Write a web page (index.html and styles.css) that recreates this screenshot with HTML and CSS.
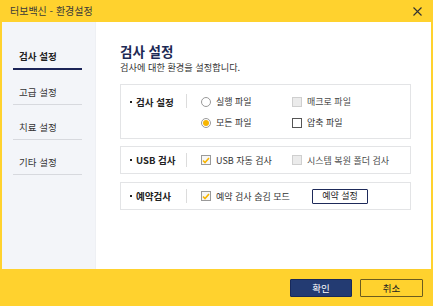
FILE: index.html
```html
<!DOCTYPE html>
<html lang="ko">
<head>
<meta charset="utf-8">
<title>터보백신 - 환경설정</title>
<link rel="stylesheet" href="styles.css">
</head>
<body>
<div class="window">
  <div class="titlebar">
    <span class="title">터보백신 - 환경설정</span>
    <svg class="close" width="9" height="9" viewBox="0 0 9 9"><path d="M0.5 0.5L8.5 8.5M8.5 0.5L0.5 8.5" stroke="#333" stroke-width="1.1" fill="none"/></svg>
  </div>
  <div class="body">
    <nav class="sidebar">
      <div class="nav-item active">검사 설정</div>
      <div class="nav-item">고급 설정</div>
      <div class="nav-item">치료 설정</div>
      <div class="nav-item">기타 설정</div>
    </nav>
    <main class="main">
      <h1 class="heading">검사 설정</h1>
      <p class="subtitle">검사에 대한 환경을 설정합니다.</p>

      <section class="box box-tall">
        <div class="label"><span class="dot"></span>검사 설정</div>
        <div class="sep"></div>
        <div class="grid">
          <div class="opt"><span class="radio"></span>실행 파일</div>
          <div class="opt disabled"><span class="check off"></span>매크로 파일</div>
          <div class="opt"><span class="radio on"></span>모든 파일</div>
          <div class="opt"><span class="check"></span>압축 파일</div>
        </div>
      </section>

      <section class="box">
        <div class="label"><span class="dot"></span>USB 검사</div>
        <div class="sep"></div>
        <div class="grid">
          <div class="opt"><span class="check checked"><svg width="8" height="7" viewBox="0 0 8 7"><path d="M1 3.5L3 5.5L7 1" stroke="#f7b500" stroke-width="1.6" fill="none"/></svg></span>USB 자동 검사</div>
          <div class="opt disabled"><span class="check off"></span>시스템 복원 폴더 검사</div>
        </div>
      </section>

      <section class="box">
        <div class="label"><span class="dot"></span>예약검사</div>
        <div class="sep"></div>
        <div class="row">
          <div class="opt wide"><span class="check checked"><svg width="8" height="7" viewBox="0 0 8 7"><path d="M1 3.5L3 5.5L7 1" stroke="#f7b500" stroke-width="1.6" fill="none"/></svg></span>예약 검사 숨김 모드</div>
          <button class="small-btn">예약 설정</button>
        </div>
      </section>
    </main>
  </div>
  <div class="footer">
    <button class="btn primary">확인</button>
    <button class="btn secondary">취소</button>
  </div>
</div>
</body>
</html>
```
FILE: styles.css
```css
* { box-sizing: border-box; }
html, body {
  margin: 0;
  padding: 0;
}
body {
  width: 433px;
  height: 306px;
  background: #ffd22e;
  font-family: "Noto Sans CJK KR", "Noto Sans", "Liberation Sans", sans-serif;
  font-size: 9px;
  color: #333;
  overflow: hidden;
}
.window {
  display: flex;
  flex-direction: column;
  height: 306px;
}
.titlebar {
  height: 22px;
  display: flex;
  align-items: center;
  justify-content: space-between;
  padding: 0 11px 0 10px;
}
.title {
  font-size: 10px;
  color: #3a3a3a;
  line-height: 12px;
}
.body {
  height: 247px;
  margin: 0 2px;
  background: #fff;
  display: flex;
}
.sidebar {
  width: 94px;
  background: #f3f5f9;
  padding-top: 12px;
  border-right: 1px solid #eef0f4;
}
.nav-item {
  margin-left: 11px;
  width: 69px;
  height: 35px;
  padding: 14px 0 0 6px;
  line-height: 16px;
  font-size: 9.5px;
  color: #333;
  border-bottom: 1px solid #d7d9de;
}
.nav-item.active {
  font-weight: 700;
  color: #222;
  border-bottom: 2px solid #1b2457;
  height: 36px;
}
.main {
  flex: 1;
  padding: 20px 20px 0 24px;
}
.heading {
  margin: 0;
  font-size: 13.5px;
  line-height: 18px;
  font-weight: 700;
  color: #1d2a55;
}
.subtitle {
  margin: 0 0 10px;
  font-size: 9.2px;
  line-height: 14px;
  color: #333;
}
.box {
  border: 1px solid #e3e4e6;
  display: flex;
  align-items: center;
  padding: 0 0 0 9px;
  height: 28px;
  margin-bottom: 8px;
}
.box-tall {
  height: 55px;
  align-items: flex-start;
  padding-top: 6px;
  margin-bottom: 7px;
}
.box-tall .label { height: 21px; }
.box-tall .sep { margin-top: 3px; }
.label {
  width: 56px;
  display: flex;
  align-items: center;
  font-weight: 700;
  font-size: 9.5px;
  color: #222;
}
.dot {
  width: 2px;
  height: 2px;
  background: #222;
  margin-right: 4px;
}
.sep {
  width: 1px;
  height: 14px;
  background: #dcdcdc;
  margin-right: 14px;
}
.grid {
  display: grid;
  grid-template-columns: 91px auto;
  grid-auto-rows: 21px;
}
.row {
  display: flex;
  align-items: center;
}
.opt {
  display: flex;
  align-items: center;
  font-size: 9px;
  color: #333;
  white-space: nowrap;
}
.opt.wide { width: 111px; }
.opt.disabled { color: #4a4a4a; }
.radio {
  width: 10px;
  height: 10px;
  border: 1px solid #9a9a9a;
  border-radius: 50%;
  background: #fff;
  margin-right: 5px;
  display: flex;
  align-items: center;
  justify-content: center;
}
.radio.on::after {
  content: "";
  width: 6px;
  height: 6px;
  border-radius: 50%;
  background: #f7b500;
}
.check {
  width: 10px;
  height: 10px;
  border: 1px solid #555;
  background: #fff;
  margin-right: 5px;
  display: flex;
  align-items: center;
  justify-content: center;
}
.check.off {
  border-color: #cfcfcf;
  background: #ebebeb;
}
.check.checked {
  border-color: #9a9a9a;
  background: #f7f7f7;
}
.small-btn {
  width: 56px;
  height: 15px;
  border: 1px solid #1e2a5a;
  border-radius: 1px;
  background: #fff;
  font-family: inherit;
  font-size: 9px;
  line-height: 12px;
  color: #222;
  padding: 0;
}
.footer {
  flex: 1;
  display: flex;
  justify-content: flex-end;
  align-items: center;
  gap: 8px;
  padding: 1px 10px 0 0;
}
.btn {
  height: 18px;
  font-family: inherit;
  font-size: 9.5px;
  padding: 0;
  border-radius: 1px;
}
.btn.primary {
  width: 62px;
  background: #233b72;
  border: 1px solid #18295a;
  color: #fff;
}
.btn.secondary {
  width: 63px;
  background: #ffd22e;
  border: 1px solid #6d5c1e;
  color: #222;
}
```
